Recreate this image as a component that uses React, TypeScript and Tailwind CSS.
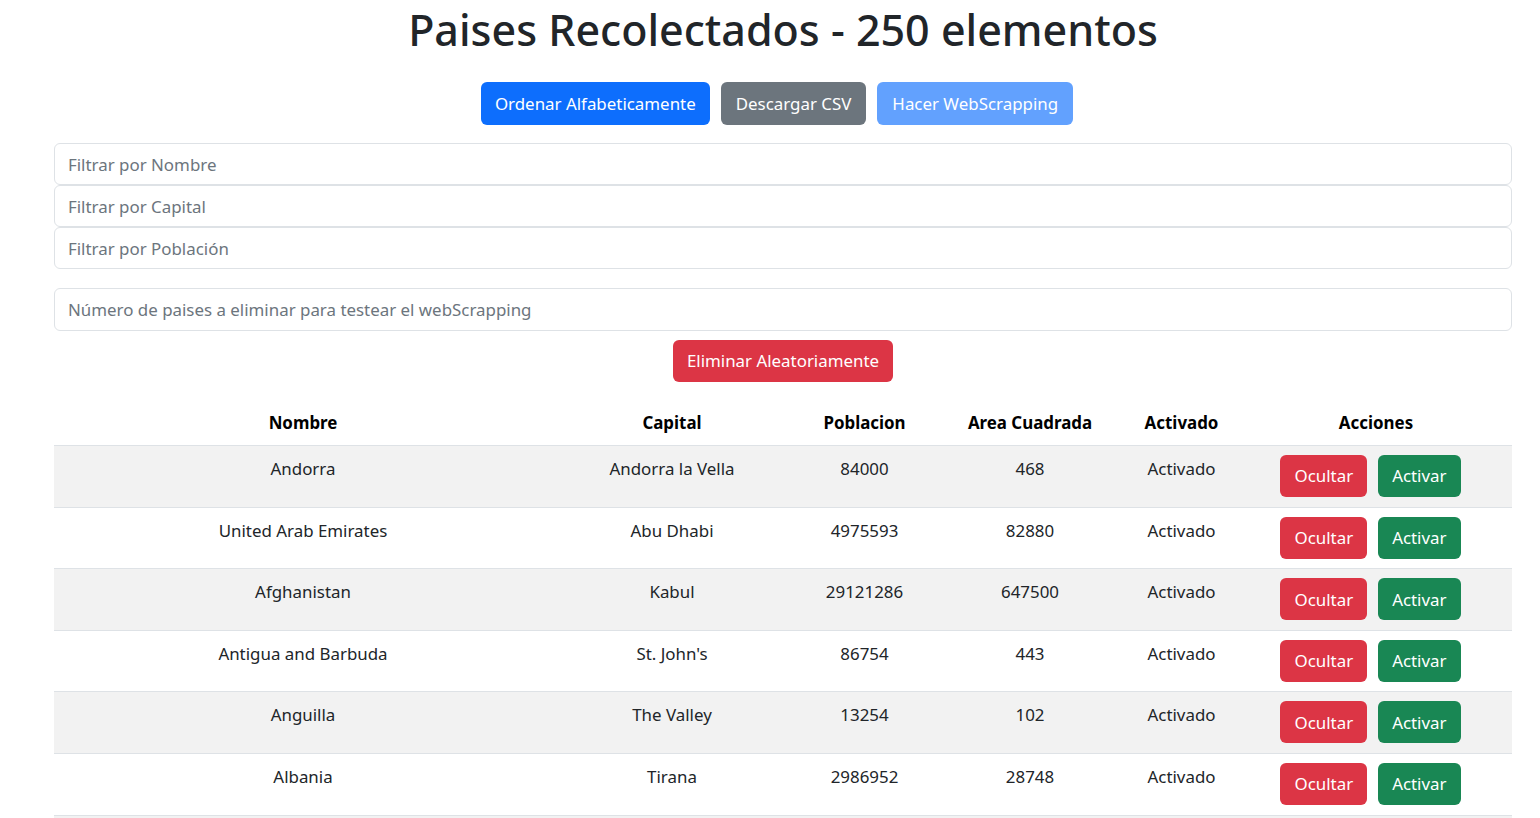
import React from 'react';

const paises = [
  { nombre: 'Andorra', capital: 'Andorra la Vella', poblacion: 84000, area: 468 },
  { nombre: 'United Arab Emirates', capital: 'Abu Dhabi', poblacion: 4975593, area: 82880 },
  { nombre: 'Afghanistan', capital: 'Kabul', poblacion: 29121286, area: 647500 },
  { nombre: 'Antigua and Barbuda', capital: "St. John's", poblacion: 86754, area: 443 },
  { nombre: 'Anguilla', capital: 'The Valley', poblacion: 13254, area: 102 },
  { nombre: 'Albania', capital: 'Tirana', poblacion: 2986952, area: 28748 },
];

const filtros = ['Filtrar por Nombre', 'Filtrar por Capital', 'Filtrar por Población'];

const App: React.FC = () => {
  return (
    <div className="min-h-screen bg-white text-[#212529] pl-[54px] pr-[28px] overflow-hidden" style={{ fontFamily: '"Noto Sans", "Open Sans", sans-serif' }}>
      <h1 className="text-center text-[43px] leading-[52px] font-medium pt-[4px]">Paises Recolectados - 250 elementos</h1>

      {/* Acciones principales */}
      <div className="flex justify-center gap-[11px] mt-[26px] pr-[12px]">
        <button className="h-[43px] px-[14px] rounded-[6px] bg-[#0d6efd] text-white text-[16.9px]">Ordenar Alfabeticamente</button>
        <button className="h-[43px] px-[15px] rounded-[6px] bg-[#6c757d] text-white text-[16.9px]">Descargar CSV</button>
        <button className="h-[43px] px-[15px] rounded-[6px] bg-[#62a1fe] text-white text-[16.9px]">Hacer WebScrapping</button>
      </div>

      {/* Filtros */}
      <div className="flex flex-col mt-[18px]">
        {filtros.map((f) => (
          <input
            key={f}
            placeholder={f}
            className="h-[42px] w-full border border-[#dee2e6] rounded-[6px] px-[13px] text-[16.9px] placeholder:text-[#6c757d] outline-none"
          />
        ))}
      </div>

      <input
        placeholder="Número de paises a eliminar para testear el webScrapping"
        className="mt-[19px] h-[43px] w-full border border-[#dee2e6] rounded-[6px] px-[13px] text-[16.9px] placeholder:text-[#6c757d] outline-none"
      />

      <div className="flex justify-center mt-[9px]">
        <button className="h-[42px] px-[14px] rounded-[6px] bg-[#dc3545] text-white text-[16.9px]">Eliminar Aleatoriamente</button>
      </div>

      {/* Tabla de paises */}
      <table className="w-full mt-[19px] border-collapse text-[16.9px] text-center table-fixed">
        <colgroup>
          <col className="w-[498px]" />
          <col className="w-[240px]" />
          <col className="w-[145px]" />
          <col className="w-[186px]" />
          <col className="w-[117px]" />
          <col />
        </colgroup>
        <thead>
          <tr className="border-b border-[#dee2e6]">
            {['Nombre', 'Capital', 'Poblacion', 'Area Cuadrada', 'Activado', 'Acciones'].map((h) => (
              <th key={h} className="py-[9px] px-[9px] font-bold leading-[26px] text-black">{h}</th>
            ))}
          </tr>
        </thead>
        <tbody>
          {paises.map((p, i) => (
            <tr key={p.nombre} className={`border-b border-[#dee2e6] align-top ${i % 2 === 0 ? 'bg-[#f2f2f2]' : 'bg-white'}`}>
              <td className="pt-[10px] px-[9px] leading-[26px]">{p.nombre}</td>
              <td className="pt-[10px] px-[9px] leading-[26px]">{p.capital}</td>
              <td className="pt-[10px] px-[9px] leading-[26px]">{p.poblacion}</td>
              <td className="pt-[10px] px-[9px] leading-[26px]">{p.area}</td>
              <td className="pt-[10px] px-[9px] leading-[26px]">Activado</td>
              <td className="pt-[9px] pb-[9.6px] px-[9px]">
                <div className="flex justify-center gap-[11px] pr-[11px]">
                  <button className="h-[42px] px-[14px] rounded-[6px] bg-[#dc3545] text-white">Ocultar</button>
                  <button className="h-[42px] px-[14px] rounded-[6px] bg-[#198754] text-white">Activar</button>
                </div>
              </td>
            </tr>
          ))}
        </tbody>
      </table>
      <div className="h-[8px] bg-[#f2f2f2]" />
    </div>
  );
};

export default App;
